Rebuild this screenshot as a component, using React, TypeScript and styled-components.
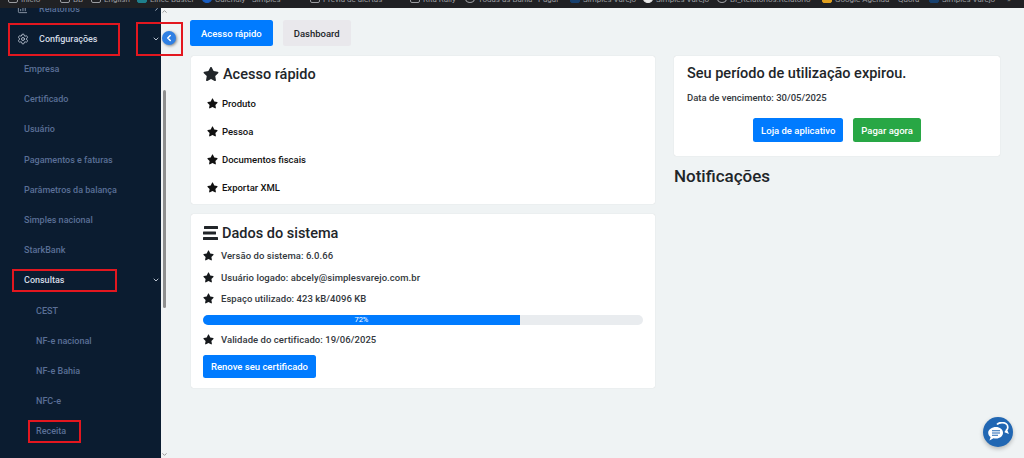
import React from "react";
import styled, { createGlobalStyle } from "styled-components";
import { Settings, BarChart3, ChevronDown, ChevronLeft, ChevronRight, ChevronUp } from "lucide-react";

const GlobalStyle = createGlobalStyle`
  html, body {
    margin: 0;
    padding: 0;
    height: 100%;
    overflow: hidden;
    background: #eff3f4;
    font-family: Roboto, "Liberation Sans", sans-serif;
  }
  * { box-sizing: border-box; }
`;

const Page = styled.div`
  width: 1024px;
  height: 458px;
  display: flex;
  flex-direction: column;
  position: relative;
  overflow: hidden;
`;

const BookmarkBar = styled.div`
  height: 8px;
  flex: none;
  background: #202124;
  display: flex;
  align-items: flex-end;
  padding: 0 0 2px 8px;
  overflow: hidden;
`;

const Bookmark = styled.span<{ $width: number }>`
  width: ${p => p.$width}px;
  flex: none;
  display: flex;
  gap: 3px;
  padding-right: 6px;
  color: #9a9ca0;
  font-size: 8px;
  line-height: 12px;
  white-space: nowrap;
  overflow: hidden;
`;

const BookmarkIcon = styled.span<{ $color?: string; $round?: boolean }>`
  width: 10px;
  height: 9px;
  flex: none;
  border-radius: ${p => (p.$round ? "50%" : "2px")};
  border: 1px solid ${p => p.$color || "#9a9ca0"};
  background: ${p => p.$color || "transparent"};
`;

const Body = styled.div`
  flex: 1;
  display: flex;
  min-height: 0;
`;

const Sidebar = styled.aside`
  width: 161px;
  flex: none;
  background: #0b1c30;
  display: flex;
  flex-direction: column;
  overflow: hidden;
`;

const MenuRow = styled.div<{ $height?: number; $indent: number }>`
  height: ${p => p.$height || 30.2}px;
  flex: none;
  padding-left: ${p => p.$indent}px;
  padding-right: 1px;
  display: flex;
  align-items: center;
  font-size: 9px;
  font-weight: 500;
  color: #5a6f96;
`;

const CutOffRow = styled(MenuRow)`
  margin-top: -12px;
`;

const ParentRow = styled(MenuRow)`
  color: #d5dbe6;
`;

const SettingsRow = styled(ParentRow)`
  padding-top: 2px;
`;

const RowIcon = styled.span`
  width: 22px;
  display: flex;
  color: #b9c2d0;
`;

const Arrow = styled.span`
  margin-left: auto;
  display: flex;
  color: #b8c0cd;
`;

const Collapse = styled.button`
  position: absolute;
  top: 31px;
  left: 162px;
  width: 14px;
  height: 14px;
  padding: 0;
  border: none;
  border-radius: 50%;
  background: #2f80e4;
  color: #fff;
  display: flex;
  align-items: center;
  justify-content: center;
  box-shadow: 1px 1px 3px rgba(0, 0, 0, 0.45);
`;

const ScrollTrack = styled.div`
  width: 7px;
  flex: none;
  background: #f1f3f4;
  position: relative;
  display: flex;
  flex-direction: column;
  justify-content: space-between;
  align-items: center;
  padding: 0;
  color: #8a8a8a;
`;

const ScrollThumb = styled.div`
  position: absolute;
  top: 82px;
  left: 2px;
  width: 3px;
  height: 218px;
  border-radius: 2px;
  background: #8f8f8f;
`;

const Main = styled.main`
  flex: 1;
  min-width: 0;
  padding: 12px 24px 0 22px;
`;

const Tabs = styled.div`
  display: flex;
  gap: 10px;
  margin-bottom: 10px;
`;

const Button = styled.button<{ $variant: "primary" | "success" | "light" }>`
  height: 26px;
  padding: 0 11px;
  border: none;
  border-radius: 2.5px;
  font-family: inherit;
  font-size: 9.5px;
  font-weight: 500;
  white-space: nowrap;
  color: ${p => (p.$variant === "light" ? "#212529" : "#fff")};
  background: ${p =>
    p.$variant === "primary" ? "#007bff" : p.$variant === "success" ? "#28a745" : "#e9e8ec"};
`;

const Columns = styled.div`
  display: grid;
  grid-template-columns: 465px 326px;
  column-gap: 19px;
  align-items: start;
`;

const Column = styled.div`
  display: flex;
  flex-direction: column;
  gap: 10px;
`;

const Card = styled.section`
  background: #fff;
  border-radius: 2.5px;
  box-shadow: 0 0 1px rgba(0, 0, 0, 0.18);
`;

const QuickCard = styled(Card)`
  height: 148px;
  margin-left: 1px;
  padding: 8px 12px 0;
`;

const SystemCard = styled(Card)`
  height: 174px;
  margin-left: 1px;
  padding: 9px 12px 0;
`;

const ExpiredCard = styled(Card)`
  height: 100px;
  padding: 9px 13px 0;
`;

const CardTitle = styled.h2`
  margin: 0;
  height: 20px;
  display: flex;
  align-items: center;
  gap: 4px;
  font-size: 14.5px;
  font-weight: 500;
  color: #212529;
`;

const QuickList = styled.div`
  margin-top: 5px;
  display: flex;
  flex-direction: column;
`;

const QuickItem = styled.div`
  height: 28px;
  padding-left: 4px;
  display: flex;
  align-items: center;
  gap: 4px;
  font-size: 9.5px;
  font-weight: 500;
  color: #111;
`;

const InfoList = styled.div`
  margin-top: 2px;
  display: flex;
  flex-direction: column;
`;

const InfoItem = styled.div`
  height: 21.5px;
  display: flex;
  align-items: center;
  gap: 7px;
  font-size: 9.5px;
  font-weight: 500;
  letter-spacing: 0.05px;
  color: #33383d;
  svg {
    color: #16191c;
  }
`;

const Progress = styled.div`
  height: 10px;
  margin: 5px 0 4px;
  border-radius: 5px;
  background: #e9ecef;
  overflow: hidden;
`;

const ProgressFill = styled.div`
  height: 100%;
  background: #007bff;
  color: #fff;
  font-size: 7.5px;
  line-height: 10px;
  text-align: center;
`;

const CertificateAction = styled.div`
  margin-top: 5px;
  display: flex;
`;

const CertificateButton = styled(Button)`
  height: 23px;
  padding: 0 8px;
`;

const ExpiredTitle = styled.h3`
  margin: 0;
  font-size: 14.5px;
  line-height: 17px;
  font-weight: 500;
  color: #212529;
`;

const DueDate = styled.p`
  margin: 10px 0 0;
  font-size: 9.5px;
  line-height: 12px;
  font-weight: 500;
  color: #33383d;
`;

const ExpiredActions = styled.div`
  margin-top: 14px;
  display: flex;
  justify-content: center;
  gap: 10px;
`;

const ExpiredButton = styled(Button)`
  height: 24px;
  padding: 0 8px;
`;

const NotificationsTitle = styled.h2`
  margin: -1px 0 0;
  font-size: 17px;
  line-height: 22px;
  font-weight: 500;
  color: #212529;
`;

const ChatBubble = styled.button`
  position: absolute;
  left: 983px;
  top: 417px;
  width: 30px;
  height: 30px;
  padding: 0;
  border: none;
  border-radius: 50%;
  background: #2167b3;
  box-shadow: 0 2px 4px rgba(0, 0, 0, 0.25);
  display: flex;
  align-items: center;
  justify-content: center;
`;

const Highlight = styled.div<{ $x: number; $y: number; $w: number; $h: number }>`
  position: absolute;
  left: ${p => p.$x}px;
  top: ${p => p.$y}px;
  width: ${p => p.$w}px;
  height: ${p => p.$h}px;
  border: 2.5px solid #e3171f;
  pointer-events: none;
`;

function Star({ size }: { size: number }) {
  return (
    <svg width={size} height={size} viewBox="0 0 576 512" fill="currentColor" style={{ flex: "none" }}>
      <path d="M259.3 17.8 194 150.2 47.9 171.5c-26.2 3.8-36.7 36.1-17.7 54.6l105.7 103-25 145.5c-4.5 26.3 23.2 46 46.4 33.7L288 439.6l130.7 68.7c23.2 12.2 50.9-7.4 46.4-33.7l-25-145.5 105.7-103c19-18.5 8.5-50.8-17.7-54.6L382 150.2 316.7 17.8c-11.7-23.6-45.6-23.9-57.4 0z" />
    </svg>
  );
}

function Bars() {
  return (
    <svg width="15" height="14" viewBox="0 0 15 14" fill="currentColor" style={{ flex: "none" }}>
      <rect x="1" y="0" width="14" height="3" rx="0.5" />
      <rect x="0" y="5.5" width="13" height="3" rx="0.5" />
      <rect x="0" y="11" width="15" height="3" rx="0.5" />
    </svg>
  );
}

function ChatIcon() {
  return (
    <svg width="22" height="20" viewBox="0 0 22 20">
      <path d="M10 2.5c1-1.2 3-1.9 5-1.9 3.4 0 5.8 2 5.8 4.6 0 1.2-.5 2.2-1.3 3l.9 2.3-2.600-1.100" fill="none" stroke="#fff" strokeWidth="1.7" />
      <path d="M9 5c4 0 7 2.500 7 5.800s-3 5.800-7 5.800c-.9 0-1.700-.1-2.500-.4L2.500 18.500l1.100-3.400C2.100 14 1.200 12.500 1.200 10.800 1.200 7.500 5 5 9 5z" fill="#fff" />
      <path d="M5 8.800h8M5 11h8M5 13.200h6" stroke="#2167b3" strokeWidth="1.1" />
    </svg>
  );
}

interface IBookmark {
  name: string;
  width: number;
  color?: string;
  round?: boolean;
  icon?: boolean;
}

const bookmarks: IBookmark[] = [
  { name: "Início", width: 52, icon: true },
  { name: "BB", width: 31, icon: true },
  { name: "English", width: 46, icon: true },
  { name: "Lince Buster", width: 65, icon: true, color: "#1f7f8c" },
  { name: "Calendly", width: 50, icon: true, color: "#1a5fc4", round: true },
  { name: "Simples", width: 58 },
  { name: "Prévia de alertas", width: 100, icon: true },
  { name: "Rita Rally", width: 55, icon: true },
  { name: "Todas as Bahia", width: 73, icon: true, round: true },
  { name: "Pagar", width: 32 },
  { name: "Simples Varejo", width: 73, icon: true, color: "#17406e" },
  { name: "Simples Varejo", width: 74, icon: true, color: "#e8e8e8", round: true },
  { name: "BI_Relatórios.Relatório", width: 105, icon: true, round: true },
  { name: "Google Agenda", width: 76, icon: true, color: "#e0a020" },
  { name: "Quora", width: 31 },
  { name: "Simples Varejo", width: 78, icon: true, color: "#17406e" },
  { name: "»", width: 10 },
];

const settingsItems = ["Empresa", "Certificado", "Usuário", "Pagamentos e faturas", "Parâmetros da balança", "Simples nacional", "StarkBank"];
const queryItems = ["CEST", "NF-e nacional", "NF-e Bahia", "NFC-e", "Receita"];
const quickItems = ["Produto", "Pessoa", "Documentos fiscais", "Exportar XML"];

export default function App() {
  return (
    <Page>
      <GlobalStyle />
      <BookmarkBar>
        {bookmarks.map((b, i) => (
          <Bookmark key={i} $width={b.width}>
            {b.icon && <BookmarkIcon $color={b.color} $round={b.round} />}
            {b.name}
          </Bookmark>
        ))}
      </BookmarkBar>
      <Body>
        <Sidebar>
          <CutOffRow $height={25} $indent={17}>
            <RowIcon><BarChart3 size={11} strokeWidth={1.5} /></RowIcon>
            Relatórios
            <Arrow><ChevronRight size={7} strokeWidth={3} /></Arrow>
          </CutOffRow>
          <SettingsRow $height={33} $indent={17}>
            <RowIcon><Settings size={12} strokeWidth={1.8} /></RowIcon>
            Configurações
            <Arrow><ChevronDown size={8} strokeWidth={3} /></Arrow>
          </SettingsRow>
          {settingsItems.map(item => (
            <MenuRow key={item} $indent={24}>{item}</MenuRow>
          ))}
          <ParentRow $indent={24}>
            Consultas
            <Arrow><ChevronDown size={8} strokeWidth={3} /></Arrow>
          </ParentRow>
          {queryItems.map(item => (
            <MenuRow key={item} $indent={36}>{item}</MenuRow>
          ))}
        </Sidebar>
        <ScrollTrack>
          <ChevronUp size={7} strokeWidth={3} />
          <ScrollThumb />
          <ChevronDown size={7} strokeWidth={3} />
        </ScrollTrack>
        <Main>
          <Tabs>
            <Button $variant="primary">Acesso rápido</Button>
            <Button $variant="light">Dashboard</Button>
          </Tabs>
          <Columns>
            <Column>
              <QuickCard>
                <CardTitle><Star size={16} />Acesso rápido</CardTitle>
                <QuickList>
                  {quickItems.map(item => (
                    <QuickItem key={item}><Star size={11} />{item}</QuickItem>
                  ))}
                </QuickList>
              </QuickCard>
              <SystemCard>
                <CardTitle><Bars />Dados do sistema</CardTitle>
                <InfoList>
                  <InfoItem><Star size={11} />Versão do sistema: 6.0.66</InfoItem>
                  <InfoItem><Star size={11} />Usuário logado: abcely@simplesvarejo.com.br</InfoItem>
                  <InfoItem><Star size={11} />Espaço utilizado: 423 kB/4096 KB</InfoItem>
                </InfoList>
                <Progress><ProgressFill style={{ width: "72%" }}>72%</ProgressFill></Progress>
                <InfoItem><Star size={11} />Validade do certificado: 19/06/2025</InfoItem>
                <CertificateAction>
                  <CertificateButton $variant="primary">Renove seu certificado</CertificateButton>
                </CertificateAction>
              </SystemCard>
            </Column>
            <Column>
              <ExpiredCard>
                <ExpiredTitle>Seu período de utilização expirou.</ExpiredTitle>
                <DueDate>Data de vencimento: 30/05/2025</DueDate>
                <ExpiredActions>
                  <ExpiredButton $variant="primary">Loja de aplicativo</ExpiredButton>
                  <ExpiredButton $variant="success">Pagar agora</ExpiredButton>
                </ExpiredActions>
              </ExpiredCard>
              <NotificationsTitle>Notificações</NotificationsTitle>
            </Column>
          </Columns>
        </Main>
      </Body>
      <Collapse><ChevronLeft size={10} strokeWidth={3.5} /></Collapse>
      <ChatBubble><ChatIcon /></ChatBubble>
      <Highlight $x={8} $y={23} $w={112} $h={33} />
      <Highlight $x={136} $y={22} $w={47} $h={34} />
      <Highlight $x={12} $y={269} $w={105} $h={23} />
      <Highlight $x={28} $y={420} $w={53} $h={23} />
    </Page>
  );
}
